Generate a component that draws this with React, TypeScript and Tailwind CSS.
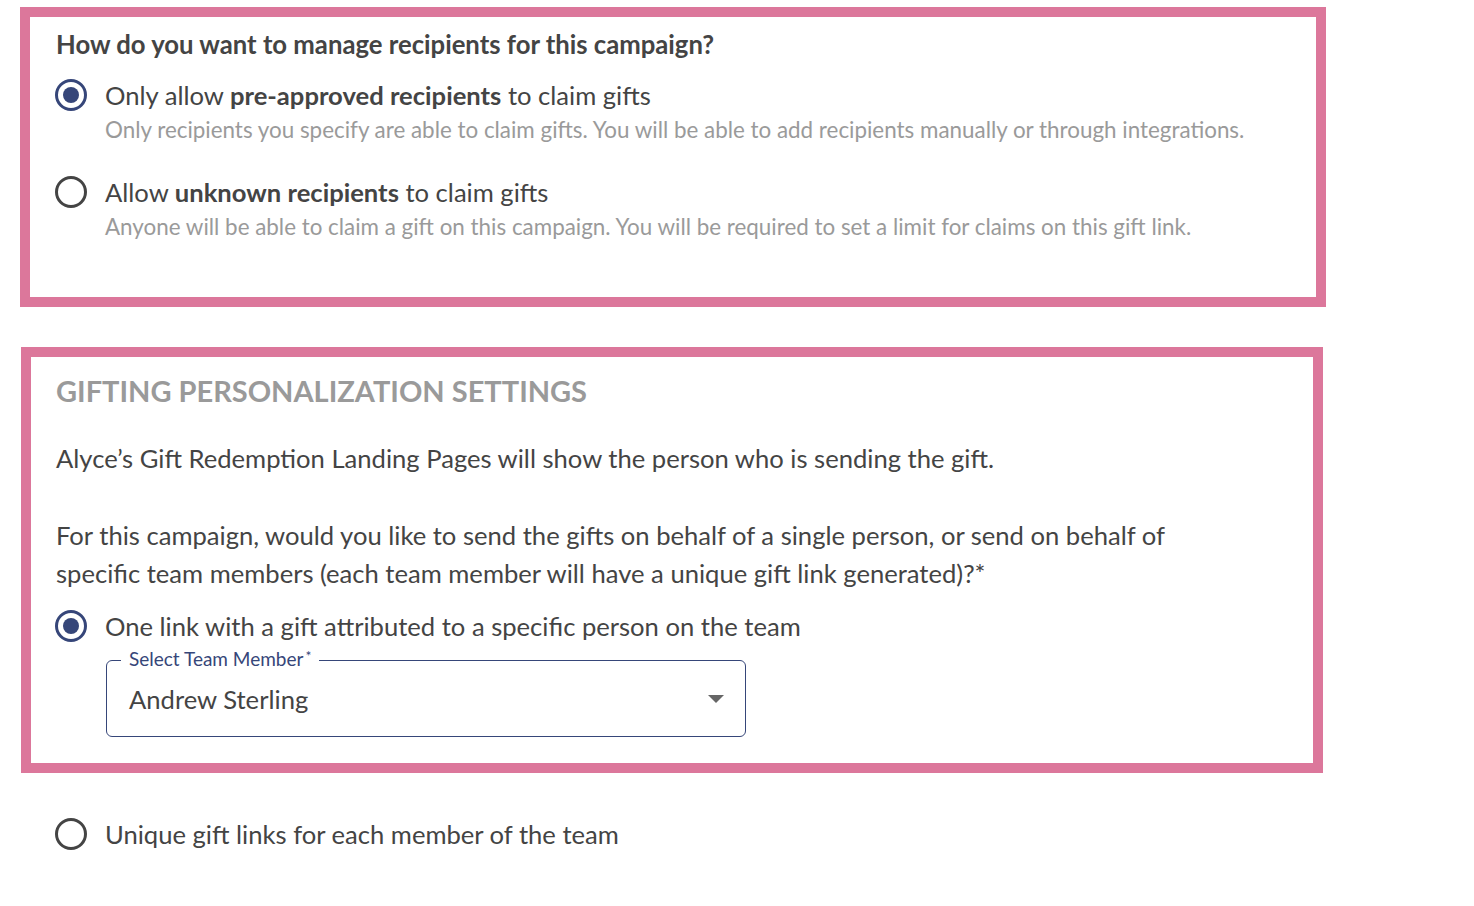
import React from 'react';

function Radio({ checked }: { checked?: boolean }) {
  return (
    <span
      className={`flex h-[32px] w-[32px] shrink-0 items-center justify-center rounded-full border-[3px] ${
        checked ? 'border-[#364679]' : 'border-[#444]'
      }`}
    >
      {checked && <span className="h-[16px] w-[16px] rounded-full bg-[#364679]" />}
    </span>
  );
}

function Option({
  checked,
  children,
  desc,
}: {
  checked?: boolean;
  children: React.ReactNode;
  desc?: string;
}) {
  return (
    <div>
      <div className="flex h-[32px] items-center gap-[18px]">
        <Radio checked={checked} />
        <span className="text-[25.6px] leading-[32px] text-[#444]">{children}</span>
      </div>
      {desc && (
        <p className="mt-[5px] pl-[50px] text-[22.4px] leading-[28px] text-[#9a9a9a]">{desc}</p>
      )}
    </div>
  );
}

export default function App() {
  return (
    <div className="min-h-screen bg-white pl-[20px] pt-[7px] font-['Lato','Noto_Sans',sans-serif]">
      <div className="w-[1306px] border-[10px] border-[#dc779b] pb-[56px] pl-[26px] pt-[13px]">
        <h2 className="text-[25.7px] font-bold leading-[28px] text-[#444]">
          How do you want to manage recipients for this campaign?
        </h2>
        <div className="-ml-px mt-[21px]">
          <Option
            checked
            desc="Only recipients you specify are able to claim gifts. You will be able to add recipients manually or through integrations."
          >
            Only allow <b className="font-bold">pre-approved recipients</b> to claim gifts
          </Option>
        </div>
        <div className="-ml-px mt-[32px]">
          <Option desc="Anyone will be able to claim a gift on this campaign. You will be required to set a limit for claims on this gift link.">
            Allow <b className="font-bold">unknown recipients</b> to claim gifts
          </Option>
        </div>
      </div>

      <div className="ml-px mt-[40px] w-[1302px] border-[10px] border-[#dc779b] pb-[26px] pl-[25px] pt-[17px]">
        <h2 className="text-[29px] font-bold leading-[34px] text-[#9a9a9a]">
          GIFTING PERSONALIZATION SETTINGS
        </h2>
        <p className="mt-[31px] text-[25.6px] leading-[38px] text-[#444]">
          Alyce’s Gift Redemption Landing Pages will show the person who is sending the gift.
        </p>
        <p className="mt-[39px] w-[1140px] text-[25.6px] leading-[38px] text-[#444]">
          For this campaign, would you like to send the gifts on behalf of a single person, or send on behalf of
          specific team members (each team member will have a unique gift link generated)?*
        </p>
        <div className="-ml-px mt-[18px]">
          <Option checked>One link with a gift attributed to a specific person on the team</Option>
        </div>
        <div className="relative ml-[50px] mt-[18px] flex h-[77px] w-[640px] items-center justify-between rounded-[6px] border border-[#364679] pl-[22px] pr-[21px]">
          <span className="absolute left-[14px] top-[-14px] bg-white px-[8px] text-[19px] leading-[24px] text-[#364679]">
            Select Team Member<span className="relative top-[-5px] ml-[2px] text-[14px]">*</span>
          </span>
          <span className="text-[25.6px] leading-[32px] text-[#444]">Andrew Sterling</span>
          <svg width="16" height="8" viewBox="0 0 16 8">
            <path d="M0 0 L16 0 L8 8 Z" fill="#666" />
          </svg>
        </div>
      </div>

      <div className="ml-[35px] mt-[45px]">
        <Option>Unique gift links for each member of the team</Option>
      </div>
    </div>
  );
}
